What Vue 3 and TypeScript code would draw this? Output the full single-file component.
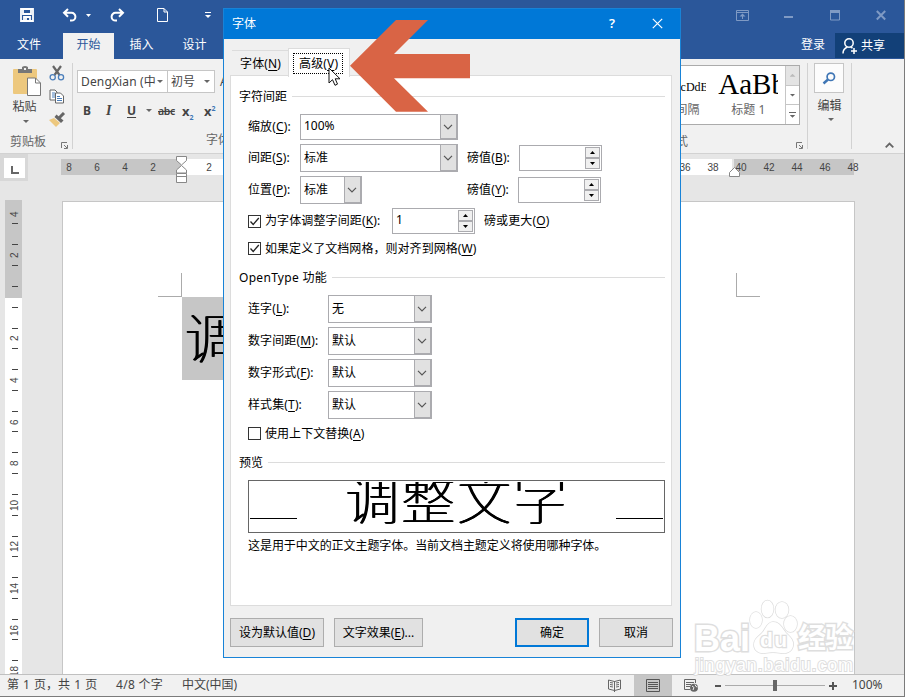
<script setup lang="ts">
interface Label {
  text: string
  key: string
}
interface ComboRow {
  label: Label
  value: string
}

const hRuler: string[] = ['8', '6', '4', '2', '']
for (let n = 2; n <= 48; n += 2) hRuler.push(String(n))

const vRuler: string[] = ['4', '2', '', '2', '4', '6', '8', '10', '12', '14', '16', '18']

const openType: ComboRow[] = [
  { label: { text: '连字', key: 'L' }, value: '无' },
  { label: { text: '数字间距', key: 'M' }, value: '默认' },
  { label: { text: '数字形式', key: 'F' }, value: '默认' },
  { label: { text: '样式集', key: 'T' }, value: '默认' },
]
</script>

<template>
  <div class="window">
    <header class="titlebar">
      <div class="quick">
        <svg class="q-save" width="14" height="14" viewBox="0 0 14 14"><path d="M1 1h12v12H1zM3 1v5h8V1M4 13V9h6v4M6 10v3" fill="none" stroke="#fff" stroke-width="1.8" /></svg>
        <svg class="q-undo" width="15" height="14" viewBox="0 0 15 14"><path d="M6 1L2 4.8l4 3.9M2 4.8h7.5a3.8 3.8 0 0 1 0 7.8H8" fill="none" stroke="#fff" stroke-width="2" /></svg>
        <svg class="q-caret" width="5" height="3"><path d="M0 0h5L2.5 3z" fill="#fff" /></svg>
        <svg class="q-redo" width="15" height="14" viewBox="0 0 15 14"><path d="M9 1l4 3.8-4 3.9M13 4.8H5.5a3.8 3.8 0 0 0 0 7.8H7" fill="none" stroke="#fff" stroke-width="2" /></svg>
        <svg class="q-new" width="11" height="14" viewBox="0 0 11 14"><path d="M.5.5H7L10.5 4v9.5H.5zM7 .5V4h3.5" fill="none" stroke="#fff" /></svg>
        <svg class="q-more" width="6" height="7" viewBox="0 0 6 7"><path d="M0 .5h6" stroke="#fff" /><path d="M0 3h6L3 6z" fill="#fff" /></svg>
      </div>
      <div class="win-controls">
        <svg width="13" height="11" viewBox="0 0 13 11"><path d="M.5.5h12v10H.5zM.5 2.5h12M6.5 9V4" fill="none" stroke="#7f9ac4" /><path d="M3.5 6.5l3-3 3 3z" fill="#7f9ac4" /></svg>
        <svg width="9" height="11" viewBox="0 0 9 11"><path d="M0 7h9" stroke="#7f9ac4" stroke-width="2" /></svg>
        <svg width="10" height="11" viewBox="0 0 10 11"><path d="M.5 1v9h9V1" fill="none" stroke="#7f9ac4" /><path d="M0 1.5h10" stroke="#7f9ac4" stroke-width="3" /></svg>
        <svg width="10" height="11" viewBox="0 0 10 11"><path d="M.8 1l8.4 8.5M9.2 1L.8 9.5" stroke="#7f9ac4" stroke-width="2" /></svg>
      </div>
      <nav class="tabs">
        <span class="tab first">文件</span>
        <span class="tab on">开始</span>
        <span class="tab">插入</span>
        <span class="tab">设计</span>
        <span class="login">登录</span>
        <span class="share">
          <svg width="15" height="16" viewBox="0 0 15 16"><circle cx="7" cy="5" r="4.2" fill="none" stroke="#fff" stroke-width="1.5" /><path d="M1 15.5c0-4 2-5.5 4.5-6.5M12 10v6M9 13h6M8.5 9l2 1" fill="none" stroke="#fff" stroke-width="1.5" /></svg>
          共享
        </span>
      </nav>
    </header>

    <section class="ribbon">
      <div class="group clip">
        <div class="clip-main">
          <div class="paste">
            <svg width="30" height="31" viewBox="0 0 30 31">
              <rect x="1" y="3" width="24" height="25" rx="1" fill="#edc87e" />
              <path d="M6 3h4V1q3-2 6 0v2h4v4H6z" fill="#777" /><rect x="12" y="2" width="2" height="2" fill="#f1f1f1" />
              <path d="M15.5 12h8l5 5v12.5h-13z" fill="#fff" stroke="#777" /><path d="M23.5 12v5h5" fill="none" stroke="#777" />
            </svg>
            <span>粘贴</span>
            <i class="caret"></i>
          </div>
          <div class="clip-tools">
            <svg width="16" height="16" viewBox="0 0 16 16"><path d="M4 1l6.5 9M12 1L5.5 10" stroke="#666" stroke-width="2.2" /><circle cx="3.7" cy="12.3" r="2.6" fill="none" stroke="#4a7ebb" stroke-width="1.3" /><circle cx="12" cy="12.3" r="2.6" fill="none" stroke="#4a7ebb" stroke-width="1.3" /></svg>
            <svg width="16" height="15" viewBox="0 0 16 15"><path d="M1 1h5l2 2v8H1z" fill="#fff" stroke="#666" /><path d="M3 4h3M3 6h3M3 8h3" stroke="#4a7ebb" /><path d="M6.5 4h5l3 3v7h-8z" fill="#fff" stroke="#666" /><path d="M8 7.500h3M8 9.500h5M8 11.500h5" stroke="#4a7ebb" /></svg>
            <svg width="17" height="15" viewBox="0 0 17 15"><path d="M0 8l5-2 6 5-4 4z" fill="#edc87e" /><path d="M5.5 5l2-2.5 7 6-2.500 2.500z" fill="#666" /><path d="M10 6l5-5" stroke="#666" stroke-width="3" /></svg>
          </div>
        </div>
        <div class="caption">
          <span>剪贴板</span>
          <svg class="launch" width="7" height="7" viewBox="0 0 7 7"><path d="M.5 6V.5H6M3 3l3 3M6.5 3v3.5H3" fill="none" stroke="#777" /></svg>
        </div>
      </div>

      <div class="group font">
        <div class="font-boxes">
          <span class="fbox name"><b>DengXian (中</b><i class="caret"></i></span>
          <span class="fbox size"><b>初号</b><i class="caret"></i></span>
          <span class="grow">A</span>
        </div>
        <div class="font-btns">
          <b>B</b><b class="it">I</b><b class="un">U</b><i class="caret"></i><s>abc</s>
          <b class="x">x<sub>2</sub></b><b class="x">x<sup>2</sup></b>
        </div>
        <div class="font-caption">字体</div>
      </div>

      <div class="group styles">
        <div class="gallery">
          <div class="style-item plain"><span class="sample">cDdE</span><span class="nm">间隔</span></div>
          <div class="style-item head"><span class="sample">AaBb</span><span class="nm">标题 1</span></div>
          <div class="scroller">
            <span class="off"><i class="caret up"></i></span>
            <span><i class="caret"></i></span>
            <span class="more"><i class="caret"></i></span>
          </div>
        </div>
        <div class="caption style-cap">
          <span>样式</span>
          <svg class="launch" width="7" height="7" viewBox="0 0 7 7"><path d="M.5 6V.5H6M3 3l3 3M6.5 3v3.5H3" fill="none" stroke="#777" /></svg>
        </div>
      </div>

      <div class="group edit">
        <div class="find"><svg width="14" height="13" viewBox="0 0 14 13"><circle cx="8.800" cy="4.800" r="3.700" fill="none" stroke="#3f76b5" stroke-width="1.700" /><path d="M6 7.500L1.500 11.500" stroke="#3f76b5" stroke-width="2.400" /></svg></div>
        <span>编辑</span>
        <i class="caret"></i>
      </div>
      <div class="collapse"><svg width="9" height="6" viewBox="0 0 9 6"><path d="M.7 5.300L4.500 1.500l3.800 3.800" fill="none" stroke="#666" stroke-width="1.800" /></svg></div>
    </section>

    <section class="work">
      <div class="h-line">
        <div class="corner"><span><svg width="8" height="8" viewBox="0 0 8 8"><path d="M1 0v7h7" fill="none" stroke="#666" stroke-width="2" /></svg></span></div>
        <div class="h-ruler">
          <div class="h-nums"><span v-for="(n, i) in hRuler" :key="i">{{ n }}</span></div>
          <svg class="indent left" width="12" height="28" viewBox="0 0 12 28"><path d="M.5.5h10v4l-5 4.500-5-4.500zM.5 17v-3l5-4.500 5 4.500v3zM.5 17.500h10v9H.5zM.5 20.500h10" fill="#fff" stroke="#888" /></svg>
          <svg class="indent right" width="12" height="11" viewBox="0 0 12 11"><path d="M.5 9.500v-4l5-5 5 5v4z" fill="#fff" stroke="#888" /></svg>
        </div>
      </div>
      <div class="canvas">
        <div class="v-ruler"><div class="v-nums"><div v-for="(n, i) in vRuler" :key="i" class="v-cell"><i></i><span>{{ n }}</span><i></i></div></div></div>
        <div class="page">
          <div class="crops"><span class="crop l"></span><span class="crop r"></span></div>
          <div class="sel">调整文字</div>
        </div>
      </div>
    </section>

    <footer class="status">
      <span class="s1">第 1 页，共 1 页</span>
      <span class="s2">4/8 个字</span>
      <span class="s3">中文(中国)</span>
      <svg class="read" width="14" height="13" viewBox="0 0 14 13"><path d="M6.500 2.500L.5 1v9l6 1.500 6-1.500V1zM6.500 2v11M2 3.500l3 .5M2 5.500l3 .5M2 7.500l3 .5M8 4l3-.5M8 6l3-.5M8 8l3-.5" fill="none" stroke="#666" /></svg>
      <span class="view"><svg width="14" height="13" viewBox="0 0 14 13"><path d="M.5.5h13v12H.5zM2 3.500h10M2 5.500h10M2 7.500h10M2 9.500h10" fill="none" stroke="#555" /></svg></span>
      <svg class="web" width="15" height="13" viewBox="0 0 15 13"><path d="M6 10.500H.5V.5h11V4M2 3.500h8M2 5.500h5M2 7.500h4" fill="none" stroke="#666" /><circle cx="10" cy="8.700" r="4" fill="#666" /><path d="M8 7l2 1.500L9 11M11 5.500l1 2 1.500.5" fill="none" stroke="#f1f1f1" /></svg>
      <span class="minus"></span>
      <span class="track"><i></i></span>
      <svg class="plus" width="8" height="8"><path d="M4 0v8M0 4h8" stroke="#555" stroke-width="2" /></svg>
      <span class="pct">100%</span>
    </footer>

    <div class="watermark">
      <svg class="wm" width="166" height="78" viewBox="0 0 166 78">
        <g fill="#fff" stroke="#dedede" stroke-width="1.500" paint-order="stroke">
          <text x="2" y="53" font-size="36" font-weight="700" stroke-width="3" textLength="56">Bai</text>
          <ellipse cx="64" cy="22" rx="6" ry="8" /><ellipse cx="75.500" cy="11" rx="6" ry="8.500" /><ellipse cx="90" cy="12" rx="6.500" ry="8" /><ellipse cx="98.500" cy="26" rx="6.500" ry="8" />
          <path d="M81 24c7 0 9 6 13 11 4 4 8 7 7 13s-7 8-12 7c-6-1-10-1-16 0-5 1-11-2-11-8s4-8 8-12 5-11 11-11z" />
          <text x="68" y="49" font-size="21" font-weight="700" stroke-width="2.500" textLength="27">du</text>
          <text x="106" y="50" font-size="28" font-weight="700" stroke-width="3" textLength="55">经验</text>
          <text x="3" y="73" font-size="18" stroke-width="2" textLength="158">jingyan.baidu.com</text>
        </g>
      </svg>
    </div>

    <div class="dialog">
      <div class="d-title">
        <span class="d-name">字体</span>
        <span class="help">?</span>
        <svg width="11" height="11" viewBox="0 0 11 11"><path d="M.8.8l9.400 9.400M10.200.8L.8 10.200" stroke="#fff" stroke-width="1.200" /></svg>
      </div>
      <div class="d-body">
        <div class="d-tabs">
          <span class="d-tab">字体(<u>N</u>)</span>
          <span class="d-tab on"><em>高级(<u>V</u>)</em></span>
        </div>
        <div class="panel">
          <div class="legend">字符间距</div>
          <div class="row r1">
            <label>缩放(<u>C</u>):</label>
            <div class="combo wide short"><span>100%</span><i><svg width="10" height="6" viewBox="0 0 10 6"><path d="M1 .8l4 4 4-4" fill="none" stroke="#555" stroke-width="1.200" /></svg></i></div>
          </div>
          <div class="row">
            <label>间距(<u>S</u>):</label>
            <div class="combo wide"><span>标准</span><i><svg width="10" height="6" viewBox="0 0 10 6"><path d="M1 .8l4 4 4-4" fill="none" stroke="#555" stroke-width="1.200" /></svg></i></div>
            <label class="pt">磅值(<u>B</u>):</label>
            <div class="spin sb"><span></span><div class="sbtn"><i></i><i class="dn"></i></div></div>
          </div>
          <div class="row">
            <label>位置(<u>P</u>):</label>
            <div class="combo small"><span>标准</span><i><svg width="10" height="6" viewBox="0 0 10 6"><path d="M1 .8l4 4 4-4" fill="none" stroke="#555" stroke-width="1.200" /></svg></i></div>
            <label class="pt far">磅值(<u>Y</u>):</label>
            <div class="spin sy"><span></span><div class="sbtn"><i></i><i class="dn"></i></div></div>
          </div>
          <div class="row r4">
            <span class="check"><svg width="11" height="11" viewBox="0 0 11 11"><path d="M1.500 5.500l2.700 3L9.800 2" fill="none" stroke="#222" stroke-width="1.300" /></svg></span>
            <label class="kern">为字体调整字间距(<u>K</u>):</label>
            <div class="spin"><span>1</span><div class="sbtn"><i></i><i class="dn"></i></div></div>
            <label class="over">磅或更大(<u>O</u>)</label>
          </div>
          <div class="row r5">
            <span class="check"><svg width="11" height="11" viewBox="0 0 11 11"><path d="M1.500 5.500l2.700 3L9.800 2" fill="none" stroke="#222" stroke-width="1.300" /></svg></span>
            <label class="auto">如果定义了文档网格，则对齐到网格(<u>W</u>)</label>
          </div>
          <div class="legend l2">OpenType 功能</div>
          <div class="ot">
            <div v-for="row in openType" :key="row.label.key" class="row">
              <label class="lb2">{{ row.label.text }}(<u>{{ row.label.key }}</u>):</label>
              <div class="combo mid"><span>{{ row.value }}</span><i><svg width="10" height="6" viewBox="0 0 10 6"><path d="M1 .8l4 4 4-4" fill="none" stroke="#555" stroke-width="1.200" /></svg></i></div>
            </div>
          </div>
          <div class="row r6">
            <span class="check"></span>
            <label class="auto">使用上下文替换(<u>A</u>)</label>
          </div>
          <div class="legend l3">预览</div>
          <div class="preview"><i></i><span>调整文字</span><i></i></div>
          <p class="note">这是用于中文的正文主题字体。当前文档主题定义将使用哪种字体。</p>
        </div>
        <div class="buttons">
          <button class="b1">设为默认值(<u>D</u>)</button>
          <button class="b2">文字效果(<u>E</u>)...</button>
          <button class="ok">确定</button>
          <button class="b4">取消</button>
        </div>
      </div>
    </div>

    <svg class="arrow" width="120" height="92" viewBox="0 0 120 92"><path d="M0 45.700L46 0h32L44 34h76v24.300H44L78 91.700H46z" fill="#d96445" /></svg>
    <svg class="cursor" width="13" height="20" viewBox="0 0 13 20"><path d="M1 1v15l3.500-3.300L7 18.300l2.500-1.200L7.200 11.800H12z" fill="#fff" stroke="#111" /></svg>
  </div>
</template>

<style>
body { margin: 0; overflow: hidden; }
</style>

<style scoped>
* { box-sizing: border-box; }
.window {
  position: relative; width: 905px; height: 697px; overflow: hidden;
  display: flex; flex-direction: column;
  border-right: 1px solid #7b7b7b; border-bottom: 1px solid #7b7b7b;
  background: #e6e6e6; color: #444;
  font: 12px/16px "Noto Sans", "Noto Sans CJK SC", sans-serif;
}
svg { display: block; flex: none; }
i { font-style: normal; }
span, label { white-space: nowrap; }

.titlebar { height: 59px; flex: none; background: #2b579a; display: grid; grid-template: 33px 26px / 1fr auto; }
.quick { display: flex; align-items: center; padding: 0 0 3px 20px; }
.q-undo { margin-left: 28px; }
.q-caret { margin-left: 9px; }
.q-redo { margin-left: 19px; }
.q-new { margin-left: 32px; }
.q-more { margin-left: 37px; }
.win-controls { display: flex; align-items: center; padding: 0 18px 3px 0; }
.win-controls svg + svg { margin-left: 35px; }
.win-controls svg:nth-child(3) { margin-left: 37px; }
.win-controls svg:nth-child(4) { margin-left: 36px; }
.tabs { grid-column: 1 / 3; display: flex; color: #fff; line-height: 24px; }
.tab { width: 53px; text-align: center; }
.tab.first { width: 58px; margin-right: 5px; }
.tab.on { width: 51px; background: #f1f1f1; color: #2b579a; margin-right: 1px; }
.login { margin-left: auto; padding-right: 10px; }
.share { width: 69px; height: 25px; background: #124078; display: flex; align-items: center; gap: 4px; padding-left: 7px; line-height: 22px; }

.ribbon { height: 95px; flex: none; display: flex; background: #f1f1f1; border-bottom: 1px solid #d2d2d2; padding-top: 4px; }
.group { height: 86px; border-right: 1px solid #d2d2d2; display: flex; flex-direction: column; flex: none; }
.caret { display: block; width: 6px; height: 3px; background: #666; clip-path: polygon(0 0, 100% 0, 50% 100%); flex: none; }
.caret.up { clip-path: polygon(50% 0, 100% 100%, 0 100%); background: #bbb; }
.clip { width: 73px; }
.clip-main { display: flex; height: 70px; flex: none; }
.paste { width: 49px; display: flex; flex-direction: column; align-items: center; padding-top: 3px; }
.paste svg { margin-left: 4px; }
.paste span { line-height: 18px; margin-top: 1px; }
.paste .caret { margin-top: 4px; margin-left: 3px; }
.clip-tools { display: flex; flex-direction: column; gap: 8px; padding-top: 2px; }
.caption { display: flex; align-items: center; color: #666; line-height: 18px; padding-left: 10px; height: 18px; flex: none; }
.launch { margin: 6px 4px 0 auto; }
.font { width: 230px; border: 0; }
.font-boxes { display: flex; padding: 7px 0 0 4px; height: 30px; }
.fbox { height: 23px; border: 1px solid #c6c6c6; background: #fff; display: flex; align-items: center; padding: 0 4px 0 3px; }
.fbox b { font-weight: 400; flex: 1; overflow: hidden; }
.fbox.name { width: 91px; letter-spacing: 0.150px; }
.fbox.size { width: 47px; border-left: 0; }
.grow { padding: 4px 0 0 5px; }
.font-btns { display: flex; align-items: center; height: 26px; padding: 0 0 0 10px; margin-top: 6px; }
.font-btns b { width: 22px; font-size: 12px; }
.font-btns .it { font-style: italic; font-family: "Liberation Serif", serif; font-size: 14px; padding-left: 1px; }
.font-btns .un { text-decoration: underline; width: 19px; text-underline-offset: 2px; }
.font-btns s { font-size: 10.500px; margin-left: 6px; width: 24px; letter-spacing: -0.400px; font-weight: 600; }
.font-btns .x { font-size: 13px; }
.x sub, .x sup { color: #3f76b5; font-size: 7px; line-height: 0; }
.font-caption { padding-left: 133px; color: #666; margin-top: 9px; line-height: 18px; }
.styles { width: 170px; margin-left: auto; padding-top: 2px; }
.gallery { height: 60px; flex: none; width: 150px; margin-left: 12px; border: 1px solid #ababab; background: #fff; display: flex; align-self: flex-start; }
.style-item { display: flex; flex-direction: column; align-items: center; color: #666; }
.style-item .sample { font-family: "Liberation Serif", serif; color: #000; height: 36px; }
.plain { width: 55px; align-items: flex-end; }
.plain .sample { font-size: 12px; line-height: 43px; width: 25px; overflow: hidden; }
.plain .nm { padding-right: 6px; }
.head { width: 80px; padding-left: 6px; }
.head .sample { font-size: 29px; line-height: 36px; width: 60px; overflow: hidden; }
.scroller { width: 14px; display: flex; flex-direction: column; margin-left: auto; flex: none; }
.scroller span { flex: 1; border-left: 1px solid #c6c6c6; border-bottom: 1px solid #c6c6c6; display: flex; align-items: center; justify-content: center; }
.scroller span:last-child { border-bottom: 0; }
.scroller .off { background: #e4e4e4; }
.scroller .more { flex-direction: column; gap: 2px; }
.scroller .more::before { content: ""; width: 7px; height: 1px; background: #666; }
.style-cap { margin-top: 8px; padding: 0 0 0 26px; }
.edit { width: 44px; align-items: center; }
.find { width: 30px; height: 30px; margin-right: 2px; border: 1px solid #c6c6c6; background: #fcfcfc; display: flex; align-items: center; justify-content: center; }
.edit span { margin-top: 5px; }
.edit .caret { margin-top: 4px; margin-left: 3px; }
.collapse { width: 52px; display: flex; align-items: flex-end; padding: 0 0 5px 33px; }

.work { flex: 1; min-height: 0; display: flex; flex-direction: column; overflow: hidden; }
.h-line { display: flex; height: 46px; flex: none; }
.corner { width: 28px; height: 27px; background: #d8d8d8; padding: 4px 3px 3px 4px; }
.corner span { display: flex; width: 21px; height: 20px; background: #fff; align-items: center; justify-content: center; padding-top: 4px; }
.h-ruler { position: relative; width: 793px; height: 16px; margin: 5px 0 0 33px; background: linear-gradient(90deg, #c6c6c6 120px, #fff 120px 671px, #e6e6e6 671px 673px, #c6c6c6 673px); }
.h-nums { display: flex; margin-left: -6px; font: 10px/18px "Liberation Sans", sans-serif; }
.h-nums span { width: 28px; flex: none; text-align: center; }
.indent { position: absolute; }
.indent.left { left: 115px; top: -3px; }
.indent.right { left: 668px; top: 8px; }
.canvas { flex: 1; min-height: 0; display: flex; }
.v-ruler { width: 17px; margin-left: 5px; flex: none; overflow: hidden; background: linear-gradient(#c6c6c6 98px, #fff 98px); }
.v-nums { margin-top: -7.200px; }
.v-cell { height: 41.600px; display: flex; flex-direction: column; align-items: center; justify-content: space-between; padding: 10px 0 10px 3px; }
.v-cell i { width: 6px; height: 1px; background: #444; flex: none; }
.v-cell:first-child i:first-child { visibility: hidden; }
.v-cell span { font: 10px/12px "Liberation Sans", sans-serif; writing-mode: vertical-rl; transform: rotate(180deg); height: 12px; display: flex; justify-content: center; }
.page { width: 793px; margin: 1px 0 0 40px; border: 1px solid #c6c6c6; border-bottom: 0; background: #fff; }
.crops { display: flex; justify-content: space-between; padding: 71px 94px 0 95px; }
.crop { width: 24px; height: 24px; border: solid #ababab; }
.crop.l { border-width: 0 1px 1px 0; }
.crop.r { border-width: 0 0 1px 1px; }
.sel { margin-left: 119px; width: 225px; height: 83px; padding-left: 2px; background: #c6c6c6; color: #000; font: 100 54px/78px "Noto Sans CJK SC", serif; text-shadow: 0.500px 0 #000, 1px 0 #000, 1.500px 0 #000; }

.status { height: 22px; flex: none; border-top: 1px solid #c0c0c0; background: #f1f1f1; display: flex; align-items: center; line-height: 18px; padding-left: 7px; }
.status > span:not(.view):not(.minus):not(.track) { padding-bottom: 2px; }
.s1 { width: 109px; word-spacing: 1px; }
.s2 { width: 66px; letter-spacing: 0.300px; }
.s3 { width: 426px; }
.view { width: 38px; height: 22px; background: #c6c6c6; margin-left: 12px; display: flex; align-items: center; justify-content: center; }
.web { margin-left: 12px; }
.minus { width: 6px; height: 2px; background: #555; margin-left: 16px; }
.track { width: 100px; height: 1px; background: #ababab; margin-left: 4px; display: flex; align-items: center; justify-content: center; }
.track i { width: 4px; height: 11px; background: #666; flex: none; }
.plus { margin-left: 4px; }
.pct { margin-left: 15px; }

.watermark { position: absolute; left: 692px; top: 598px; font-family: "Liberation Sans", "Noto Sans CJK SC", sans-serif; }

.dialog { position: absolute; isolation: isolate; left: 223px; top: 8px; width: 458px; height: 650px; border: 1px solid #1883d7; background: #f0f0f0; color: #000; display: flex; flex-direction: column; }
.d-title { height: 30px; flex: none; background: #0078d7; color: #fff; display: flex; align-items: center; padding: 0 17px 2px 8px; }
.d-name { flex: 1; padding-top: 1px; }
.help { font-size: 13px; font-weight: 600; margin-right: 37px; }
.d-body { flex: 1; padding: 9px 7px 0 6px; }
.d-tabs { display: flex; height: 28px; align-items: flex-end; padding-left: 2px; letter-spacing: 0.150px; }
.d-tab { width: 56px; height: 26px; border-top: 1px solid #dcdcdc; padding: 5px 0 0 8px; }
.d-tab.on { width: 62px; height: 29px; border: 1px solid #dcdcdc; border-bottom: 0; background: #fff; padding: 4px 0 0 4px; z-index: 1; align-self: flex-start; }
.d-tab em { display: block; width: 50px; height: 21px; border: 1px dotted #000; font-style: normal; padding-left: 5px; line-height: 19px; }
.panel { width: 442px; height: 531px; margin-top: -1px; border: 1px solid #dcdcdc; background: #fff; padding: 11px 6px 0 8px; }
.legend { display: flex; align-items: center; height: 19px; gap: 5px; }
.legend::after { content: ""; flex: 1; height: 1px; background: #dcdcdc; }
.l2 { margin: 7px 0 6px; letter-spacing: 0.300px; }
.l3 { margin: 6px 0 8px; }
.row { height: 32px; display: flex; align-items: center; padding-left: 9px; }
.r1 { height: 30px; margin-top: 6px; }
.r4 { height: 30px; }
.r5 { height: 25px; }
.r6 { height: 26px; }
.row label { width: 52px; flex: none; letter-spacing: 0.120px; }
.row .lb2 { width: 80px; }
.row .pt { margin-left: 9px; width: 52px; }
.row .far { margin-left: 105px; width: 51px; }
.row .kern { width: 127px; margin-left: 4px; }
.row .over { margin-left: 9px; width: 80px; }
.row .auto { margin-left: 4px; width: auto; letter-spacing: 0.050px; }
u { text-underline-offset: 2px; }
.combo { height: 28px; border: 1px solid #ababaf; background: #fff; display: flex; }
.combo span { flex: 1; padding-left: 3px; line-height: 25px; }
.combo i { width: 17px; background: #e1e1e1; border: 1px solid #ababaf; border-width: 0 1px 1px 1px; padding-right: 1px; display: flex; align-items: center; justify-content: center; }
.combo i svg { margin-left: -1px; }
.short { height: 26px; }
.short span { line-height: 22px; }
.wide { width: 158px; }
.small { width: 62px; }
.mid { width: 104px; }
.spin { width: 83px; height: 26px; border: 1px solid #ababaf; display: flex; }
.spin > span { flex: 1; padding-left: 3px; line-height: 22px; }
.sbtn { width: 16px; height: 24px; padding: 1px 1px 0 0; display: flex; flex-direction: column; }
.sbtn i { height: 11px; flex: none; background: #f0f0f0; border: 1px solid #ababaf; display: flex; align-items: center; justify-content: center; }
.sbtn i::after { content: ""; width: 5px; height: 3px; background: #000; clip-path: polygon(50% 0, 100% 100%, 0 100%); }
.sbtn .dn::after { clip-path: polygon(0 0, 100% 0, 50% 100%); }
.check { width: 13px; height: 13px; border: 1px solid #333; background: #fff; flex: none; }
.r6 .check { margin-bottom: 1px; }
.preview { width: 417px; height: 53px; margin-left: 9px; border: 1px solid #666; display: flex; justify-content: space-between; align-items: flex-start; padding: 1px; overflow: hidden; }
.preview i { width: 47px; height: 1px; background: #000; margin-top: 36px; }
.preview span { font: 100 54px/54px "Noto Sans CJK SC", serif; letter-spacing: 2px; height: 49px; overflow: hidden; display: flex; align-items: center; padding-bottom: 19px; text-shadow: 0.500px 0 #000, 1px 0 #000, 1.500px 0 #000; }
.note { margin: 3px 0 0 9px; line-height: 20px; white-space: nowrap; letter-spacing: -0.060px; }
.buttons { display: flex; margin-top: 12px; width: 443px; }
button { height: 29px; padding: 0; border: 1px solid #adadad; background: #e1e1e1; color: #000; font: inherit; width: 74px; white-space: nowrap; }
.b1 { width: 94px; margin-right: 10px; }
.b2 { width: 89px; }
.ok { border: 2px solid #0078d7; margin: 0 10px 0 auto; }

.arrow { position: absolute; left: 350px; top: 20px; }
.cursor { position: absolute; left: 328px; top: 67px; }
</style>
